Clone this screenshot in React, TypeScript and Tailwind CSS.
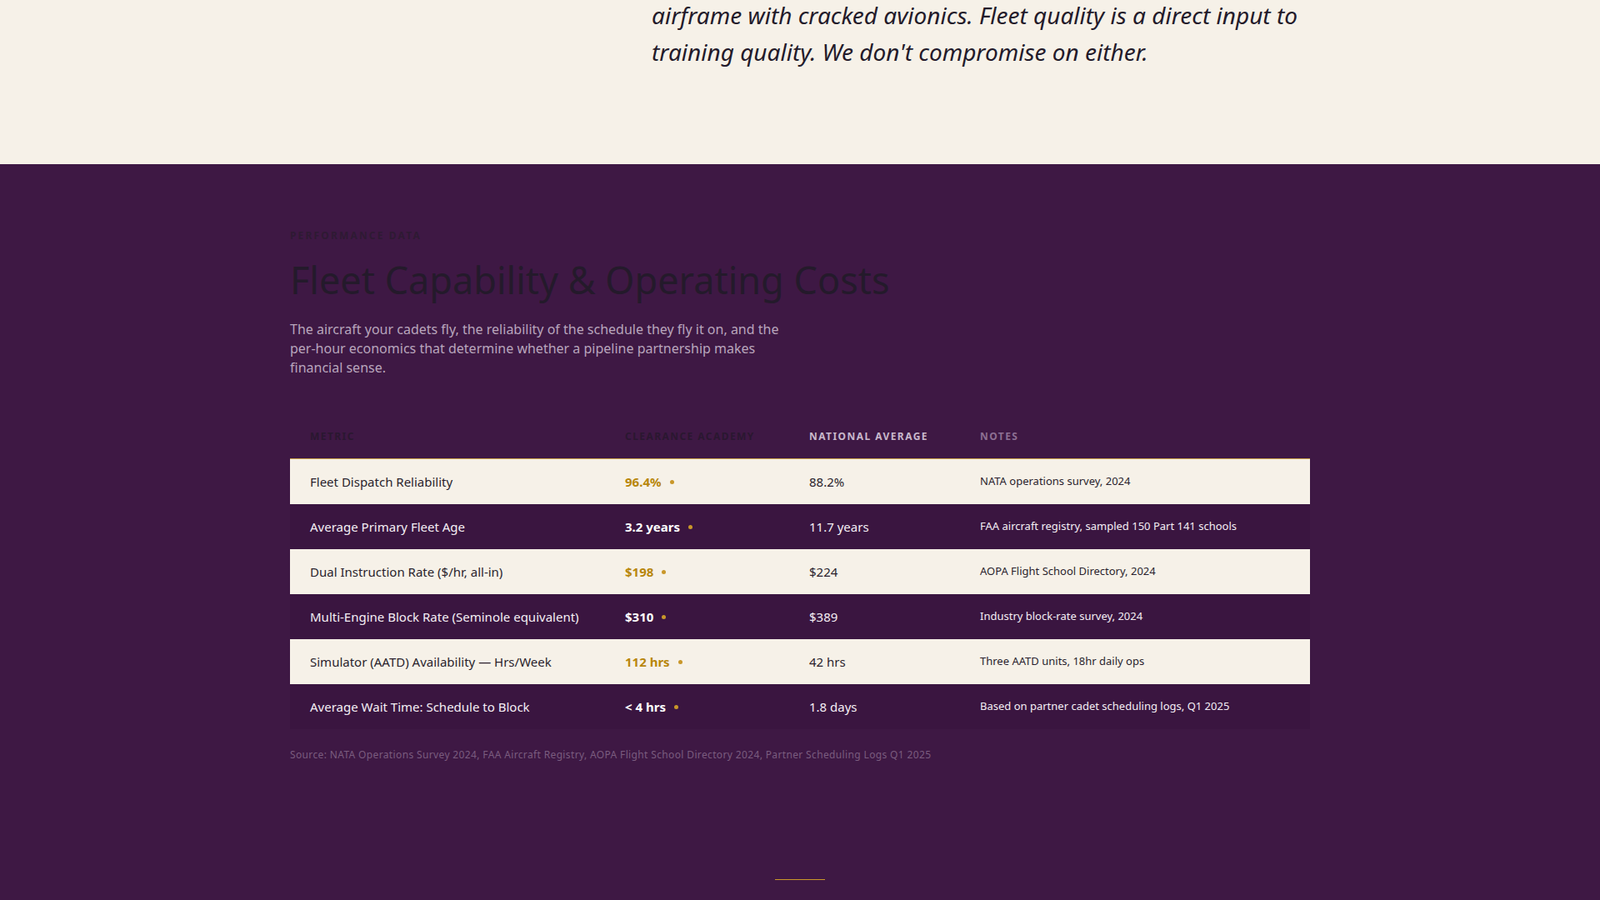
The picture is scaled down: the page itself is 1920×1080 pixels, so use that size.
const ROWS = [
  ['Fleet Dispatch Reliability', '96.4%', '88.2%', 'NATA operations survey, 2024'],
  ['Average Primary Fleet Age', '3.2 years', '11.7 years', 'FAA aircraft registry, sampled 150 Part 141 schools'],
  ['Dual Instruction Rate ($/hr, all-in)', '$198', '$224', 'AOPA Flight School Directory, 2024'],
  ['Multi-Engine Block Rate (Seminole equivalent)', '$310', '$389', 'Industry block-rate survey, 2024'],
  ['Simulator (AATD) Availability — Hrs/Week', '112 hrs', '42 hrs', 'Three AATD units, 18hr daily ops'],
  ['Average Wait Time: Schedule to Block', '< 4 hrs', '1.8 days', 'Based on partner cadet scheduling logs, Q1 2025'],
]

export default function App() {
  return (
    <div className="w-[1920px] min-h-[1080px] bg-[#3e1844] font-['DejaVu_Sans',sans-serif]">
      {/* Quote tail */}
      <section className="bg-[#f6f1e8] h-[197px] overflow-hidden">
        <div className="pl-[782px] pr-[300px] -mt-[4px]">
          <p className="font-['DejaVu_Serif',serif] italic text-[28px] leading-[44px] text-[#231a2a]">
            airframe with cracked avionics. Fleet quality is a direct input to
            <br />
            training quality. We don't compromise on either.
          </p>
        </div>
      </section>

      <section className="h-[883px] flex flex-col">
        <div className="w-[1224px] mx-auto pt-[77px]">
          <div className="text-[12px] font-bold tracking-[0.18em] uppercase text-[#2e1a33]">
            Performance Data
          </div>
          <h2 className="mt-[16px] font-['Liberation_Serif',serif] text-[45px] leading-[56px] text-[#241a2b]">
            Fleet Capability &amp; Operating Costs
          </h2>
          <p className="mt-[20px] w-[610px] text-[16px] leading-[23px] text-[#b8a5bc]">
            The aircraft your cadets fly, the reliability of the schedule they fly it on, and the per-hour economics that determine whether a pipeline partnership makes financial sense.
          </p>

          <div className="mt-[44px]">
            <div className="flex items-center h-[54px] border-b border-[#c9a04a] text-[12px] font-bold tracking-[0.12em] uppercase">
              <div className="w-[402px] pl-[24px] text-[#2a1730]">Metric</div>
              <div className="w-[221px] text-[#2a1730]">Clearance Academy</div>
              <div className="w-[205px] text-[#c9b8cc]">National Average</div>
              <div className="flex-1 text-[#8d6f93]">Notes</div>
            </div>
            {ROWS.map(([metric, ours, nat, note], i) => {
              const light = i % 2 === 0
              return (
                <div
                  key={metric}
                  className={`flex items-center h-[54px] ${light ? 'bg-[#f6f1e8] text-[#2a1f2d]' : 'bg-[#3a1540] text-[#f4eef4]'}`}
                >
                  <div className="w-[402px] pl-[24px] text-[15px]">{metric}</div>
                  <div className={`w-[221px] flex items-center gap-[10px] text-[15px] font-bold ${light ? 'text-[#b8860b]' : 'text-white'}`}>
                    {ours}
                    <span className="w-[5px] h-[5px] rounded-full bg-[#c9972a]" />
                  </div>
                  <div className="w-[205px] text-[15px]">{nat}</div>
                  <div className="flex-1 text-[13px]">{note}</div>
                </div>
              )
            })}
          </div>

          <div className="mt-[22px] text-[12px] tracking-[0.03em] text-[#7a5c7f]">
            Source: NATA Operations Survey 2024, FAA Aircraft Registry, AOPA Flight School Directory 2024, Partner Scheduling Logs Q1 2025
          </div>
        </div>
        <div className="mt-auto mb-[24px] mx-auto w-[60px] h-px bg-[#c9972a]" />
      </section>
    </div>
  )
}
